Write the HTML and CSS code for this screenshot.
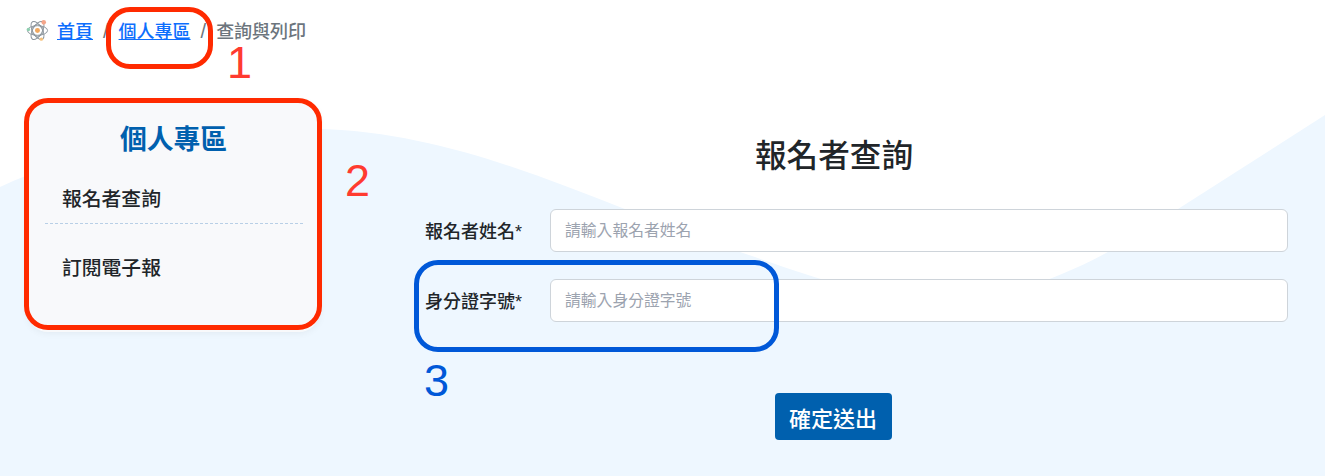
FILE: index.html
```html
<!DOCTYPE html>
<html lang="zh-Hant">
<head>
    <meta charset="UTF-8">
    <meta name="viewport" content="width=device-width, initial-scale=1.0">
    <title>報名者查詢</title>
    <link rel="stylesheet" href="styles.css">
</head>
<body>
    <svg class="wave" viewBox="0 0 1325 476" aria-hidden="true">
        <path d="M0 187C90 145 210 126 320 129C470 133 600 205 740 252C800 272 870 300 940 300C1030 300 1110 255 1178 209L1325 115V476H0Z" fill="#eef7ff"/>
    </svg>

    <nav class="breadcrumb">
        <svg class="logo" viewBox="0 0 24 24" fill="none" stroke="#8b949c" stroke-width="1">
            <ellipse cx="12" cy="12" rx="10.5" ry="5"/>
            <ellipse cx="12" cy="12" rx="10.5" ry="5" transform="rotate(60 12 12)"/>
            <ellipse cx="12" cy="12" rx="10.5" ry="5" transform="rotate(120 12 12)"/>
            <circle cx="12" cy="12" r="6"/>
            <circle cx="12" cy="12" r="2.6" fill="#f0a860" stroke="none"/>
            <circle cx="18.5" cy="3.5" r="2.4" fill="#f4a58a" stroke="none"/>
            <circle cx="2.5" cy="11" r="1.8" fill="#8fcfb0" stroke="none"/>
            <circle cx="16" cy="21" r="1.8" fill="#f5c27e" stroke="none"/>
        </svg>
        <a href="#">首頁</a>
        <span class="sep">/</span>
        <a href="#">個人專區</a>
        <span class="sep">/</span>
        <span class="current">查詢與列印</span>
    </nav>

    <main class="content">
        <aside class="sidebar">
            <h2>個人專區</h2>
            <ul>
                <li>報名者查詢</li>
                <li>訂閱電子報</li>
            </ul>
        </aside>

        <section class="query">
            <h1>報名者查詢</h1>
            <form>
                <div class="field">
                    <label for="name">報名者姓名*</label>
                    <input type="text" id="name" placeholder="請輸入報名者姓名">
                </div>
                <div class="field">
                    <label for="idno">身分證字號*</label>
                    <input type="text" id="idno" placeholder="請輸入身分證字號">
                </div>
                <div class="button-container">
                    <button type="button">確定送出</button>
                </div>
            </form>
        </section>
    </main>

    <div class="mark mark-1"></div>
    <div class="mark mark-2"></div>
    <div class="mark mark-3"></div>
    <span class="num num-1">1</span>
    <span class="num num-2">2</span>
    <span class="num num-3">3</span>
</body>
</html>
```

FILE: styles.css
```css
html, body {
    margin: 0;
    height: 476px;
    overflow: hidden;
}
body {
    position: relative;
    background-color: #fff;
    color: #212529;
    font-family: "Liberation Sans", "Noto Sans CJK TC", sans-serif;
}
.wave {
    position: absolute;
    left: 0;
    top: 0;
    width: 1325px;
    height: 476px;
}
.breadcrumb {
    position: relative;
    display: flex;
    align-items: center;
    height: 24px;
    padding: 18px 0 0 26px;
    font-size: 18px;
    font-weight: 500;
}
.breadcrumb .logo {
    width: 23px;
    height: 23px;
    margin-right: 8px;
}
.breadcrumb a {
    color: #0d6efd;
    text-decoration: underline;
}
.breadcrumb .sep {
    margin: 3px 10px 0 10px;
    color: #6c757d;
    font-size: 20px;
    font-weight: 400;
}
.breadcrumb .current {
    color: #6c757d;
}
.content {
    position: relative;
    display: flex;
    align-items: flex-start;
    padding: 61px 37px 0 28px;
}
.sidebar {
    box-sizing: border-box;
    width: 291px;
    height: 229px;
    padding: 17px 16px 0 17px;
    background-color: #f8f9fb;
    border-radius: 20px;
    box-shadow: 0 0 8px rgba(0, 0, 0, 0.07);
}
.sidebar h2 {
    margin: 0 1px 0 0;
    color: #0060ae;
    font-size: 26.8px;
    line-height: 40px;
    font-weight: 700;
    text-align: center;
}
.sidebar ul {
    margin: 19px 0 0;
    padding: 0;
    list-style: none;
}
.sidebar li {
    height: 40px;
    padding: 0 17px;
    font-size: 19.8px;
    line-height: 40px;
    font-weight: 500;
}
.sidebar li:first-child {
    height: 44px;
    margin-bottom: 24px;
    border-bottom: 1px dashed #b8cfe6;
}
.query {
    flex: 1;
    margin-left: 106px;
}
.query h1 {
    margin: 30px 45px 30px 0;
    font-size: 31.6px;
    line-height: 46px;
    font-weight: 500;
    text-align: center;
}
.field {
    display: flex;
    align-items: center;
    height: 43px;
    margin-bottom: 27px;
}
.field label {
    width: 125px;
    padding-bottom: 2px;
    font-size: 18px;
    font-weight: 500;
}
.field input {
    box-sizing: border-box;
    flex: 1;
    height: 43px;
    padding: 0 14px;
    background-color: #fff;
    border: 1px solid #ced4da;
    border-radius: 6px;
    font-family: inherit;
    font-size: 15.8px;
}
.field input::placeholder {
    color: #9ca3af;
}
.button-container {
    display: flex;
    justify-content: center;
    margin-top: 71px;
    padding-right: 47px;
}
.button-container button {
    width: 117px;
    height: 47px;
    padding: 0;
    background-color: #0060ae;
    color: #fff;
    border: none;
    border-radius: 4px;
    font-family: inherit;
    font-size: 22px;
    font-weight: 500;
}
/* annotations drawn over the page */
.mark {
    position: absolute;
    box-sizing: border-box;
}
.mark-1 {
    left: 106px;
    top: 7px;
    width: 107px;
    height: 62px;
    border: 5px solid #ff2a00;
    border-radius: 24px;
}
.mark-2 {
    left: 24px;
    top: 98px;
    width: 298px;
    height: 232px;
    border: 5px solid #ff2a00;
    border-radius: 24px;
}
.mark-3 {
    left: 414px;
    top: 260px;
    width: 365px;
    height: 92px;
    border: 5px solid #0058d8;
    border-radius: 24px;
}
.num {
    position: absolute;
    font-size: 45px;
    line-height: 34px;
    color: #ff3b30;
}
.num-1 {
    left: 227px;
    top: 46px;
}
.num-2 {
    left: 345px;
    top: 164px;
}
.num-3 {
    left: 424px;
    top: 364px;
    color: #0058d8;
}
```
